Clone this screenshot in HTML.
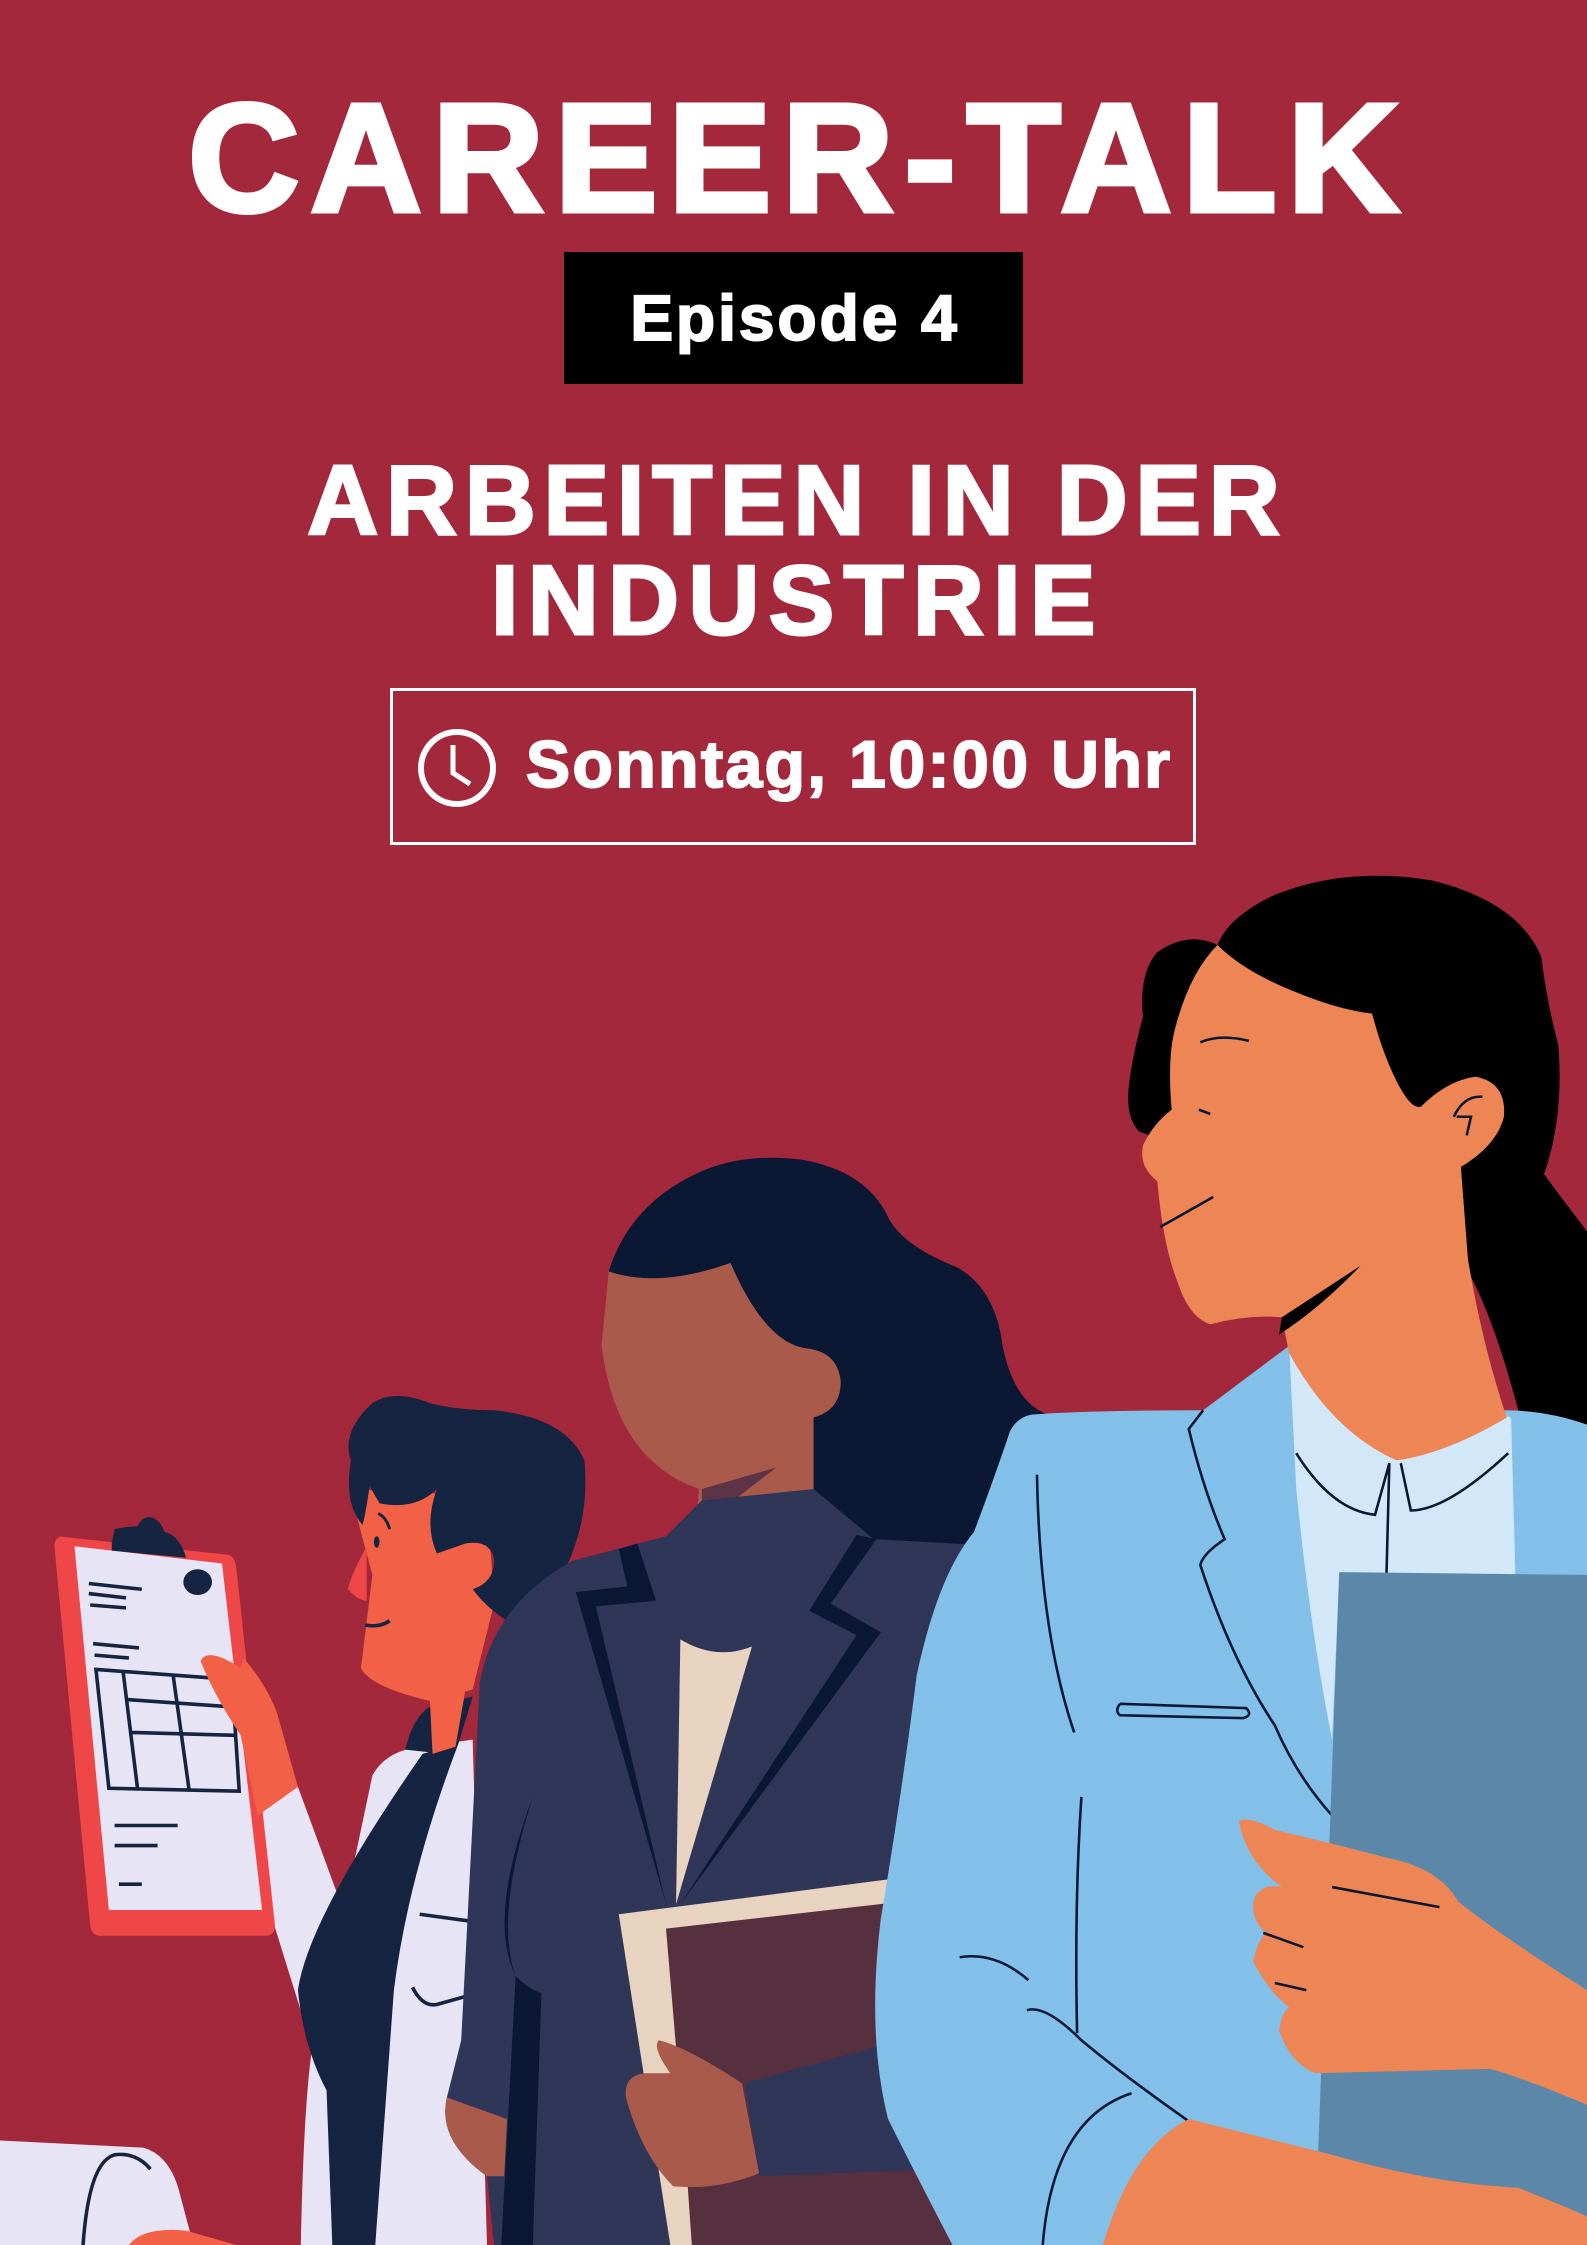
<!DOCTYPE html>
<html><head><meta charset="utf-8"><style>
html,body{margin:0;padding:0}
body{width:1587px;height:2245px;background:#A3283B;position:relative;overflow:hidden;font-family:"Liberation Sans",sans-serif;font-weight:bold;color:#fff}
.t{position:absolute;left:0;width:1587px;text-align:center;white-space:nowrap;line-height:1}
svg{position:absolute;left:0;top:0}
</style></head><body>
<svg width="1587" height="2245" viewBox="0 0 1108 1568" preserveAspectRatio="none">
<path d="M0 1495 L100 1500 Q118 1505 125 1530 L135 1568 L0 1568Z" fill="#E7E4F5"/>
<path d="M58 1568 Q62 1510 80 1505 Q95 1503 105 1515" stroke="#152440" stroke-width="2.5" fill="none"/>
<path d="M90 1568 Q100 1555 130 1558 L165 1568Z" fill="#F26045"/>
<path d="M180 1265 L208 1248 L240 1335 L260 1240 Q270 1222 295 1220 L330 1215 L340 1568 L210 1568 Q212 1470 218 1430 L190 1340Z" fill="#E7E4F5"/>
<path d="M295 1225 Q215 1340 208 1390 Q212 1430 228 1460 L232 1568 L262 1568 L275 1390 Q285 1310 320 1218Z" fill="#152440"/>
<path d="M283 1222 Q288 1200 300 1192 L330 1185 L320 1218 L310 1225Z" fill="#152440"/>
<path d="M300 1185 L302 1225 L318 1220 L325 1180Z" fill="#F26045"/>
<path d="M293 1337 L330 1342" stroke="#152440" stroke-width="2.5"/>
<path d="M288 1388 Q295 1402 305 1400 L330 1393" stroke="#152440" stroke-width="2.5" fill="none"/>
<path d="M244 1040 L260 1100 L252 1165 Q258 1178 300 1188 L330 1180 L345 1120 L340 1045Z" fill="#F26045"/>
<path d="M256 1080 Q245 1100 243 1110 Q250 1118 256 1118Z" fill="#EF4747"/>
<path d="M245 1020 Q238 1000 260 980 Q275 970 300 980 Q320 985 345 985 Q395 990 408 1020 Q412 1060 395 1095 L370 1140 Q345 1130 330 1110 Q345 1105 345 1090 Q343 1075 325 1078 L305 1085 Q296 1065 305 1040 Q290 1055 265 1050 L258 1038 Q255 1060 253 1065 Q240 1050 245 1020Z" fill="#152440"/>
<ellipse cx="263" cy="1077" rx="2" ry="4" fill="#152440"/>
<path d="M264 1057 Q270 1060 272 1068" stroke="#152440" stroke-width="2" fill="none"/>
<path d="M255 1135 Q265 1137 272 1132" stroke="#152440" stroke-width="2.5" fill="none"/>
<path d="M40 1073 L160 1086 Q164 1088 165 1095 L192 1345 Q192 1352 185 1352 L70 1352 Q64 1352 63 1345 L38 1080 Q38 1073 45 1073Z" fill="#EF4747"/>
<path d="M52 1080 L155 1092 L183 1334 L76 1334Z" fill="#E7E4F5"/>
<path d="M78 1078 L80 1068 Q90 1066 96 1066 Q100 1058 106 1060 Q112 1062 115 1070 Q125 1072 130 1088 L78 1083Z" fill="#152440"/>
<ellipse cx="138" cy="1105" rx="10" ry="9" fill="#152440"/>
<g stroke="#152440" stroke-width="2.5" fill="none">
<path d="M62 1106 L99 1110 M62 1113 L88 1116 M63 1121 L88 1123 M65 1148 L97 1151 M66 1156 L90 1158"/>
<path d="M67 1166 L162 1173 L167 1251 L76 1249Z M86 1168 L96 1249 M121 1171 L132 1250 M88 1187 L160 1192 M92 1210 L164 1212"/>
<path d="M80 1275 L124 1275 M80 1289 L110 1289 M83 1316 L99 1316"/>
</g>
<path d="M140 1160 Q145 1150 168 1165 L170 1158 Q185 1175 193 1195 L208 1248 L180 1268 L168 1212 Q150 1185 140 1160Z" fill="#F26045"/>
<path d="M425 888 Q440 840 490 818 Q520 805 560 810 Q605 818 620 850 Q630 870 668 885 Q695 900 700 940 Q710 990 745 990 L745 1080 L540 1080 L560 960Z" fill="#0A1833"/>
<path d="M425 888 Q460 900 510 882 Q535 940 565 942 Q585 945 587 965 Q587 985 568 990 L568 1150 L480 1150 L488 1040 Q430 1020 420 940Z" fill="#A95A4B"/>
<path d="M490 1040 L542 1025 L490 1065Z" fill="#5C3445"/>
<path d="M490 1048 L465 1073 L400 1090 Q345 1120 335 1175 L322 1425 L312 1465 Q305 1495 340 1520 L345 1568 L680 1568 L700 1080 L610 1075 L568 1040 Z" fill="#2F3657"/>
<path d="M475 1145 Q500 1160 525 1150 L472 1330Z" fill="#E8D2C0"/>
<path d="M402 1112 L438 1108 L432 1082 L445 1078 L458 1118 L416 1122 L465 1330 Z" fill="#0A1833"/>
<path d="M598 1072 L565 1125 L598 1142 L475 1330 L615 1140 L580 1120 L612 1075Z" fill="#0A1833"/>
<path d="M372 1255 Q340 1340 360 1380 Q370 1390 378 1392 L372 1568 L350 1568 L360 1380 Q345 1340 372 1255Z" fill="#0A1833"/>
<path d="M312 1465 Q305 1495 340 1520 L352 1520 L354 1480Z" fill="#A95A4B"/>
<path d="M432 1337 L625 1312 L628 1568 L468 1568Z" fill="#E8D2C0"/>
<path d="M465 1347 L640 1327 L640 1518 L480 1525Z" fill="#57303F"/>
<path d="M480 1525 L650 1515 L665 1568 L483 1568Z" fill="#57303F"/>
<path d="M520 1455 L610 1430 L640 1420 L655 1515 L530 1520Z" fill="#2F3657"/>
<path d="M460 1425 Q480 1430 518 1455 L530 1518 Q500 1530 470 1527 Q448 1505 437 1465 Q435 1450 450 1448 L468 1448 Q455 1430 460 1425Z" fill="#A95A4B"/>
<path d="M850 660 Q830 650 808 665 Q795 680 798 710 Q790 740 788 760 Q786 780 795 790 L1020 880 Q1040 910 1060 985 L1108 995 L1108 860 Q1085 830 1078 820 Q1092 780 1088 730 Q1080 700 1076 668 Q1060 630 1000 615 Q940 605 890 625 Q858 640 850 660Z" fill="#000"/>
<path d="M720 988 Q760 985 840 985 L900 940 L1050 985 Q1080 985 1108 995 L1108 1568 L665 1568 Q640 1520 620 1480 Q605 1420 615 1340 Q630 1250 640 1170 Q655 1100 680 1070 Q695 1030 705 1000 Q710 990 720 988Z" fill="#82BFE9"/>
<path d="M900 940 L1055 990 L1058 1100 L935 1100 L930 1215 Q915 1140 905 1040Z" fill="#D2E7F8"/>
<path d="M850 660 Q870 680 910 695 Q935 705 958 708 Q965 735 975 755 Q985 775 992 773 Q1010 755 1030 752 Q1052 756 1050 780 Q1045 800 1020 815 L1025 880 Q1035 940 1052 990 Q1010 1015 975 1020 Q930 1000 900 945 L895 920 Q870 918 845 925 Q830 920 822 895 Q812 870 808 825 Q795 815 798 800 Q805 785 818 775 Q815 740 820 720 Q830 680 850 660Z" fill="#EE8555"/>
<path d="M895 920 L950 884 Q920 915 893 932Z" fill="#000"/>
<path d="M1020 815 L1025 880 Q1030 890 1040 882 L1030 810Z" fill="#000"/>
<g stroke="#0A1833" stroke-width="1.8" fill="none">
<path d="M838 728 Q852 722 872 727"/><path d="M837 775 L845 778"/><path d="M810 857 L847 836"/>
<path d="M1015 780 Q1022 765 1035 766 M1017 780 L1027 780 L1024 793"/>
<path d="M905 1015 Q930 1055 960 1058 L970 1022 L968 1100 M978 1022 L985 1055 Q1010 1055 1053 1015"/>
<path d="M840 985 L830 998 Q840 1040 855 1075 Q840 1085 838 1093 Q860 1160 890 1205 Q905 1240 930 1268"/>
<path d="M724 1030 Q726 1140 750 1210"/><path d="M782 1190 L870 1193 Q875 1198 868 1200 L782 1198 Q778 1195 782 1190"/>
<path d="M755 1255 Q750 1330 752 1420"/><path d="M670 1367 Q695 1363 718 1383"/><path d="M717 1404 Q730 1400 755 1425 Q785 1450 832 1483"/><path d="M790 1462 Q735 1480 728 1568"/>
</g>
<path d="M935 1098 L1108 1100 L1108 1568 L918 1568Z" fill="#5B88A8"/>
<path d="M865 1272 Q872 1268 890 1278 Q940 1290 970 1298 Q1005 1305 1018 1328 Q1045 1350 1108 1390 L1108 1470 Q1060 1450 1040 1445 L918 1448 Q900 1440 893 1418 Q895 1405 900 1402 Q885 1390 875 1370 Q878 1355 884 1350 Q872 1340 876 1325 Q882 1315 895 1318 Q870 1300 865 1272Z" fill="#EE8555"/>
<g stroke="#0A1833" stroke-width="1.8"><path d="M930 1318 L1005 1332 M882 1350 L910 1360 M890 1385 L912 1390"/></g>
<path d="M770 1568 Q790 1500 830 1480 L930 1505 Q1000 1525 1060 1528 Q1090 1540 1108 1548 L1108 1568Z" fill="#EE8555"/>
</svg>

<div class="t" style="top:81px;font-size:154px;letter-spacing:11px;text-indent:11px;-webkit-text-stroke:5px #fff">CAREER-TALK</div>
<div style="position:absolute;left:564px;top:252px;width:459px;height:132px;background:#000"></div>
<div class="t" style="top:286px;font-size:64px;letter-spacing:3px;text-indent:3px;-webkit-text-stroke:2px #fff">Episode 4</div>
<div class="t" style="top:451px;font-size:98px;letter-spacing:8px;text-indent:8px;-webkit-text-stroke:3px #fff">ARBEITEN IN DER</div>
<div class="t" style="top:551px;font-size:98px;letter-spacing:9.5px;text-indent:9px;-webkit-text-stroke:3px #fff">INDUSTRIE</div>
<div style="position:absolute;left:390px;top:688px;width:800px;height:151px;border:3px solid #fff"></div>
<svg width="1587" height="2245" viewBox="0 0 1587 2245">
<circle cx="457" cy="768" r="36" stroke="#fff" stroke-width="6" fill="none"/>
<path d="M453 745 L453 773 L470 784" stroke="#fff" stroke-width="5" fill="none"/>
</svg>
<div style="position:absolute;left:526px;top:731px;font-size:66px;letter-spacing:2.5px;line-height:1;white-space:nowrap;-webkit-text-stroke:2px #fff">Sonntag, 10:00 Uhr</div>
</body></html>
